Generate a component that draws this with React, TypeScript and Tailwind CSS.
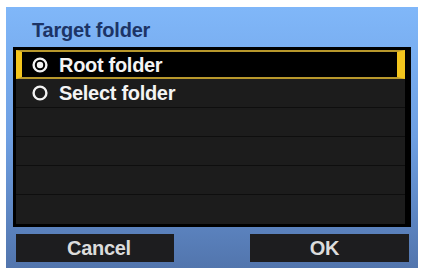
import React from "react";

function Radio({ checked }: { checked: boolean }) {
  return (
    <svg width="16" height="16" viewBox="0 0 16 16" className="shrink-0">
      <circle cx="8" cy="8" r="6.4" fill="none" stroke="#f2f2f2" strokeWidth="2.4" />
      {checked && <circle cx="8" cy="8" r="3.2" fill="#f2f2f2" />}
    </svg>
  );
}

export default function App() {
  const font = { fontFamily: '"Liberation Sans", Arial, sans-serif' };
  return (
    <div className="w-[423px] h-[270px] bg-white pt-[7px] pl-[6px] pr-[5px] pb-[2px]" style={font}>
      <div className="h-full flex flex-col bg-gradient-to-b from-[#80b7f9] via-[#6e9fe2] to-[#5275ad] px-[7px]">
        <div className="h-[40px] flex items-center pl-[19px] pt-[5px] text-[20px] font-bold text-[#1c3466] tracking-[-0.2px]">
          Target folder
        </div>
        <div className="h-[180px] bg-black pl-[3px] pr-[6px] py-[3px] flex flex-col">
          <div className="h-[29px] flex items-center bg-black border-t-2 border-b-2 border-[#b8982c] border-l-[6px] border-l-[#f3c51d] border-r-[8px] border-r-[#f3c51d] pl-[10px] gap-[11px]">
            <Radio checked />
            <span className="text-[20px] font-bold text-[#f4f4f4] leading-none tracking-[-0.3px]">Root folder</span>
          </div>
          <div className="h-[29px] flex items-center bg-[#1c1c1c] border-b border-[#0e0e0e] pl-[16px] gap-[11px]">
            <Radio checked={false} />
            <span className="text-[20px] font-bold text-[#f4f4f4] leading-none tracking-[-0.3px]">Select folder</span>
          </div>
          <div className="h-[29px] bg-[#1c1c1c] border-b border-[#0e0e0e]" />
          <div className="h-[29px] bg-[#1c1c1c] border-b border-[#0e0e0e]" />
          <div className="h-[29px] bg-[#1c1c1c] border-b border-[#0e0e0e]" />
          <div className="h-[29px] bg-[#1c1c1c]" />
        </div>
        <div className="flex justify-between pl-[3px] pr-[2px] pt-[7px]">
          <div className="w-[158px] h-[28px] bg-[#1d1d1f] flex items-center justify-center pl-[8px] text-[20px] font-bold text-[#dcdcdc] tracking-[-0.3px]">
            Cancel
          </div>
          <div className="w-[159px] h-[28px] bg-[#1d1d1f] flex items-center justify-center pr-[10px] text-[20px] font-bold text-[#dcdcdc] tracking-[-0.3px]">
            OK
          </div>
        </div>
      </div>
    </div>
  );
}
